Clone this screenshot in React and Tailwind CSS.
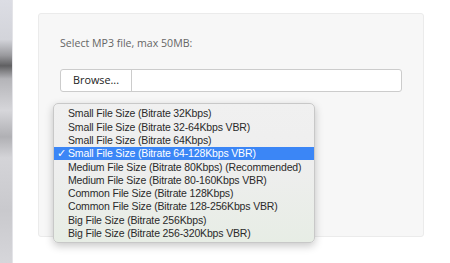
import React from "react";

const items = [
  "Small File Size (Bitrate 32Kbps)",
  "Small File Size (Bitrate 32-64Kbps VBR)",
  "Small File Size (Bitrate 64Kbps)",
  "Small File Size (Bitrate 64-128Kbps VBR)",
  "Medium File Size (Bitrate 80Kbps) (Recommended)",
  "Medium File Size (Bitrate 80-160Kbps VBR)",
  "Common File Size (Bitrate 128Kbps)",
  "Common File Size (Bitrate 128-256Kbps VBR)",
  "Big File Size (Bitrate 256Kbps)",
  "Big File Size (Bitrate 256-320Kbps VBR)",
];

export default function App() {
  return (
    <div className="relative w-[450px] h-[263px] bg-white overflow-hidden flex">
      <div className="w-[13px] h-full shrink-0 border-r border-[#e4e4e8] bg-[linear-gradient(to_bottom,#dcdde4_0%,#d3d4da_15%,#9a9a9e_21%,#606062_25%,#b4b4b8_30%,#d6d6da_42%,#b0b0b4_52%,#d4d4d8_60%,#c9c9cd_80%,#d6d6da_100%)]" />
      <div className="pl-[25px] pt-[13px]">
        <div className="w-[386px] h-[224px] rounded-[3px] border border-[#ebebeb] bg-[#f7f7f7] px-[21px] pt-[22px] font-['Open_Sans',sans-serif]">
          <div className="text-[10.6px] leading-[15px] text-[#666]">Select MP3 file, max 50MB:</div>
          <div className="mt-[18px] flex h-[23px] w-[342px] rounded-[3px] border border-[#cccccc] bg-white">
            <div className="flex w-[71px] items-center justify-center border-r border-[#cccccc] text-[10.8px] text-[#222]">
              Browse...
            </div>
            <div className="flex-1" />
          </div>
        </div>
      </div>
      <div className="absolute left-[53px] top-[103px] w-[262px] h-[140px] rounded-[5px] border border-[#c8c8c8] bg-[linear-gradient(to_bottom,#f0f0f0_0%,#eeeeee_45%,#e7ede5_100%)] shadow-[0_3px_8px_rgba(0,0,0,0.22)] pt-[3px] font-['Liberation_Sans',sans-serif]">
        {items.map((t, i) => (
          <div
            key={i}
            className={
              "flex h-[13.3px] items-center text-[10.5px] tracking-[-0.15px] leading-none whitespace-nowrap " +
              (i === 3 ? "bg-[#3b86f6] text-white" : "text-[#2a2a2a]")
            }
          >
            <span className="w-[14px] shrink-0 pl-[3px] text-[11px] font-['DejaVu_Sans',sans-serif]">{i === 3 ? "✓" : ""}</span>
            <span>{t}</span>
          </div>
        ))}
      </div>
    </div>
  );
}
